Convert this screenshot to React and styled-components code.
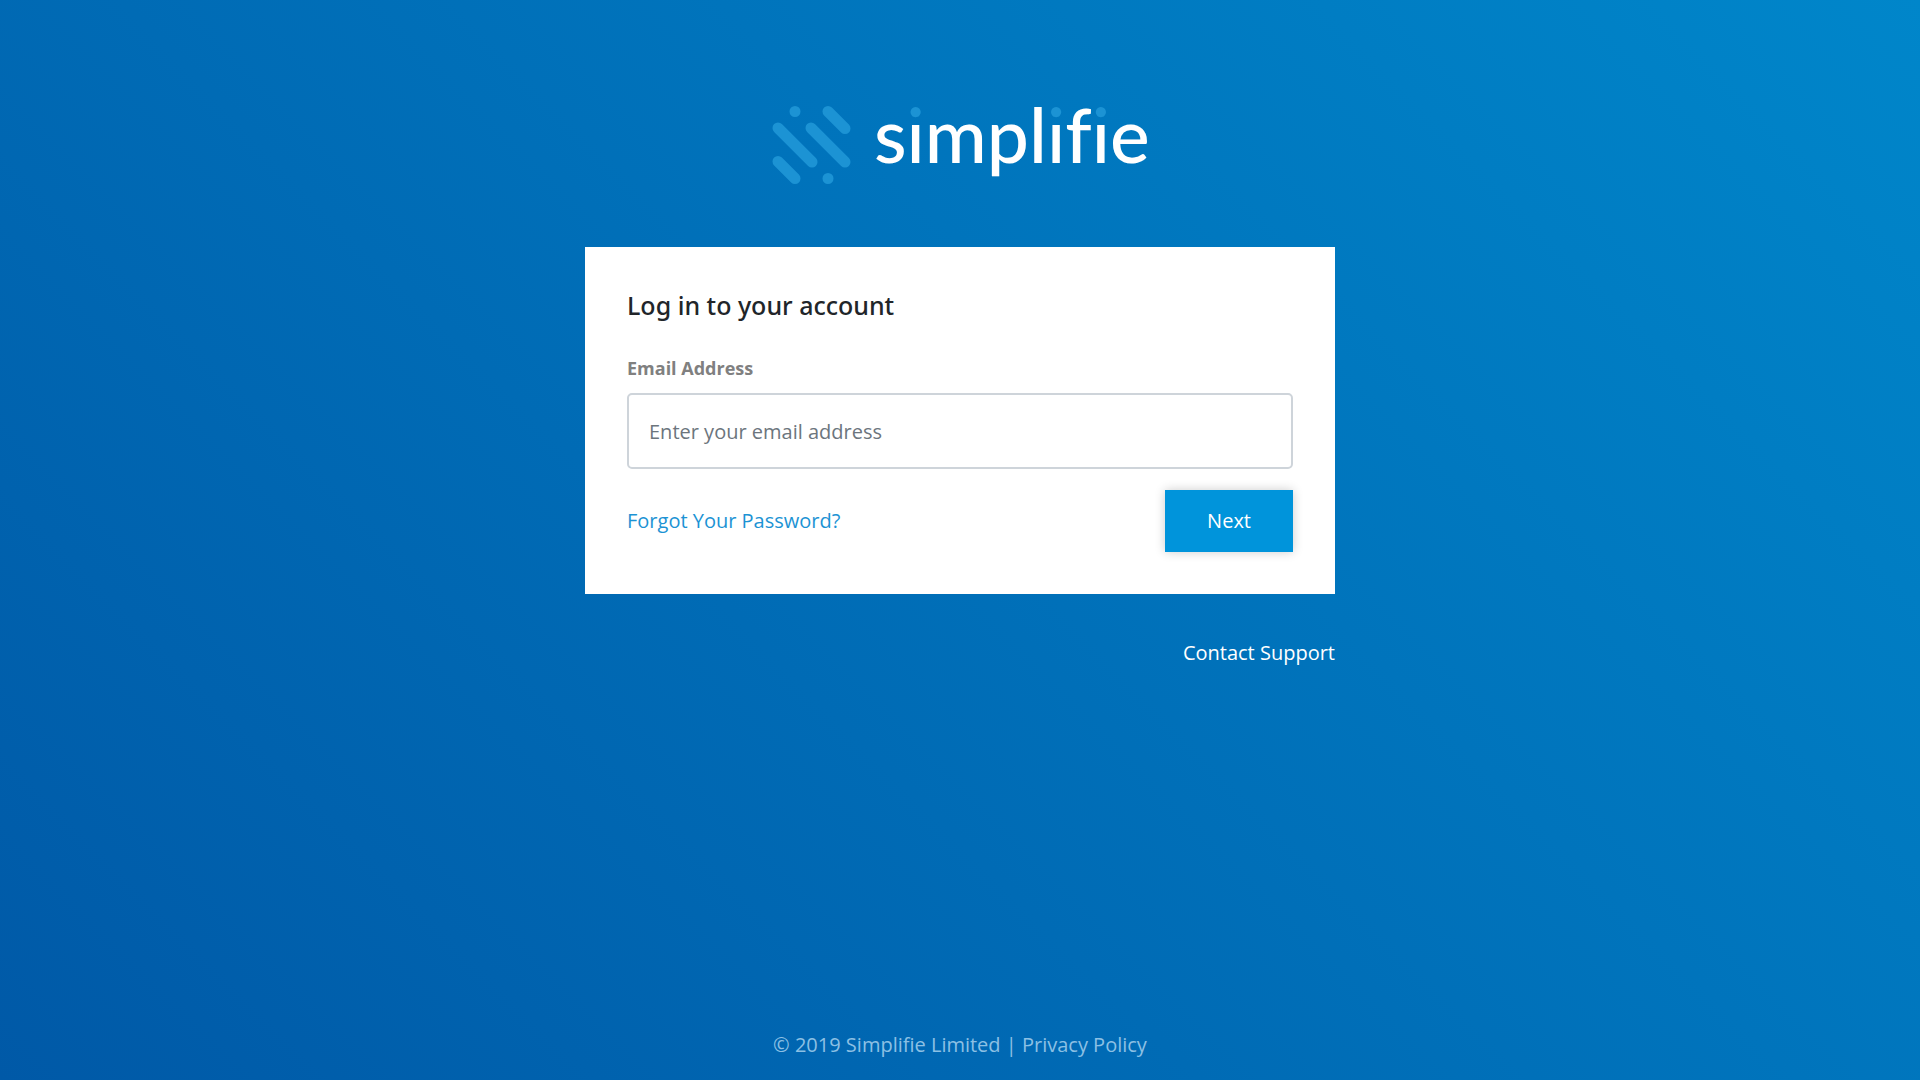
import React, { useState } from "react";
import styled, { createGlobalStyle } from "styled-components";

const Logo = () => (
  <LogoSvg viewBox="0 -20 378 116" role="img" aria-label="simplifie">
    <defs>
      <linearGradient
        id="dotted"
        gradientUnits="userSpaceOnUse"
        x1="0"
        y1="0"
        x2="0"
        y2="84"
      >
        <stop offset="0.22" stopColor="#1c93d4" />
        <stop offset="0.22" stopColor="#fff" />
      </linearGradient>
    </defs>
    <g stroke="#1c93d4" strokeWidth="11" strokeLinecap="round">
      <path d="M24 7.500h.01M57 74.500h.01M57 7.500l17 17M7 24l34 34M40 24l34 34M7 57.500l17 17" />
    </g>
    <Wordmark x="103" y="59">
      s<tspan fill="url(#dotted)">i</tspan>mpl
      <tspan fill="url(#dotted)">i</tspan>f
      <tspan fill="url(#dotted)">i</tspan>e
    </Wordmark>
  </LogoSvg>
);

const App = () => {
  const [email, setEmail] = useState("");

  return (
    <>
      <GlobalStyle />
      <Page>
        <Content>
          <Logo />
          <Card onSubmit={(e) => e.preventDefault()}>
            <Title>Log in to your account</Title>
            <Label htmlFor="email">Email Address</Label>
            <Input
              id="email"
              type="email"
              placeholder="Enter your email address"
              value={email}
              onChange={(e) => setEmail(e.target.value)}
            />
            <Actions>
              <Link href="#forgot">Forgot Your Password?</Link>
              <Button type="submit">Next</Button>
            </Actions>
          </Card>
          <Support>
            <Link href="#support" color="#fff">
              Contact Support
            </Link>
          </Support>
        </Content>
        <Footer>
          © 2019 Simplifie Limited |{" "}
          <Link href="#privacy" color="inherit">
            Privacy Policy
          </Link>
        </Footer>
      </Page>
    </>
  );
};

export default App;

const GlobalStyle = createGlobalStyle`
  * {
    box-sizing: border-box;
  }

  body {
    margin: 0;
    font-family: "Open Sans", "Noto Sans", sans-serif;
    font-size: 20px;
    line-height: 32px;
    color: #212529;
  }
`;

const Page = styled.div`
  min-height: 100vh;
  display: flex;
  flex-direction: column;
  align-items: center;
  justify-content: space-between;
  padding: 84px 20px 19px;
  background: linear-gradient(45deg, #0059a7, #0086ca);
`;

const Content = styled.main`
  width: 100%;
  max-width: 750px;
  display: flex;
  flex-direction: column;
`;

const LogoSvg = styled.svg`
  width: 378px;
  max-width: 100%;
  align-self: center;
  margin-bottom: 47px;
`;

const Wordmark = styled.text`
  fill: #fff;
  font-family: Lato, sans-serif;
  font-size: 75px;
  font-weight: 500;
  line-height: 1;
  font-variant-ligatures: none;
`;

const Card = styled.form`
  display: flex;
  flex-direction: column;
  padding: 42px;
  background-color: #fff;
`;

const Title = styled.h1`
  margin: 0 0 31px;
  font-family: "Noto Sans", sans-serif;
  font-size: 25px;
  font-weight: 500;
  line-height: 32px;
`;

const Label = styled.label`
  margin-bottom: 9px;
  color: #808080;
  font-size: 18px;
  font-weight: 700;
  line-height: 32px;
`;

const Input = styled.input`
  width: 100%;
  height: 76px;
  padding: 0 20px;
  border: solid 2px #ced4da;
  border-radius: 5px;
  outline: none;
  font: inherit;
  color: #495057;

  &:focus {
    border-color: #0094db;
  }

  &::placeholder {
    color: #6c757d;
    opacity: 1;
  }
`;

const Actions = styled.div`
  display: flex;
  align-items: center;
  justify-content: space-between;
  margin-top: 21px;
`;

const Link = styled.a`
  color: ${({ color }) => color || "#1c93d4"};
  text-decoration: none;

  &:hover {
    text-decoration: underline;
  }
`;

const Button = styled.button`
  padding: 15px 42px;
  border: none;
  background-color: #0094db;
  box-shadow: 0 0 10px rgba(0, 0, 0, 0.2);
  color: #fff;
  font: inherit;
  cursor: pointer;
`;

const Support = styled.div`
  margin-top: 43px;
  text-align: right;
`;

const Footer = styled.footer`
  color: #8cc0e4;
  text-align: center;
`;
